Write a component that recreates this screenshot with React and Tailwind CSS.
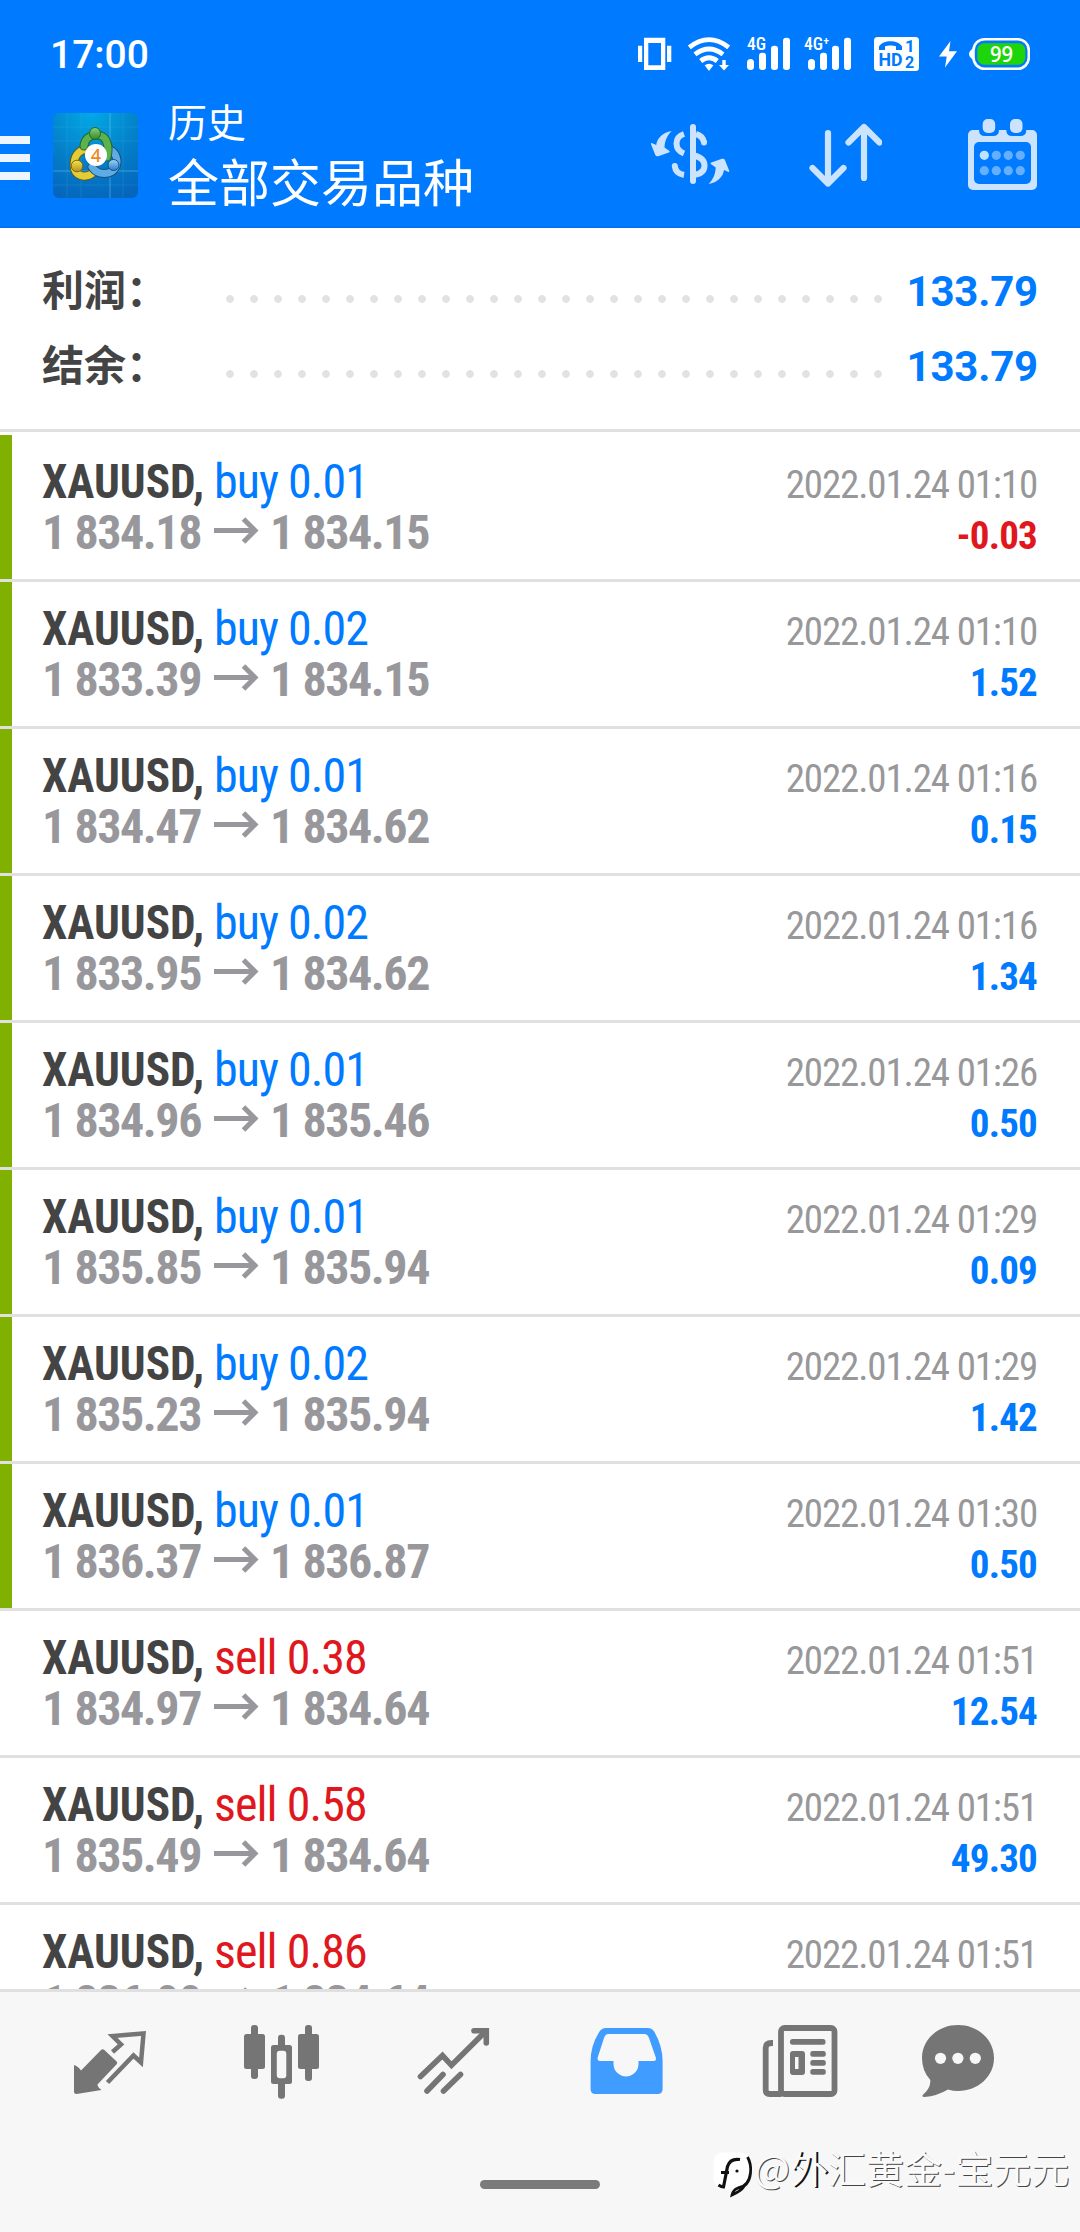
import React from 'react';

const deals = [
  { type: 'buy', lots: '0.01', open: '1 834.18', close: '1 834.15', time: '2022.01.24 01:10', profit: '-0.03', marked: true },
  { type: 'buy', lots: '0.02', open: '1 833.39', close: '1 834.15', time: '2022.01.24 01:10', profit: '1.52', marked: true },
  { type: 'buy', lots: '0.01', open: '1 834.47', close: '1 834.62', time: '2022.01.24 01:16', profit: '0.15', marked: true },
  { type: 'buy', lots: '0.02', open: '1 833.95', close: '1 834.62', time: '2022.01.24 01:16', profit: '1.34', marked: true },
  { type: 'buy', lots: '0.01', open: '1 834.96', close: '1 835.46', time: '2022.01.24 01:26', profit: '0.50', marked: true },
  { type: 'buy', lots: '0.01', open: '1 835.85', close: '1 835.94', time: '2022.01.24 01:29', profit: '0.09', marked: true },
  { type: 'buy', lots: '0.02', open: '1 835.23', close: '1 835.94', time: '2022.01.24 01:29', profit: '1.42', marked: true },
  { type: 'buy', lots: '0.01', open: '1 836.37', close: '1 836.87', time: '2022.01.24 01:30', profit: '0.50', marked: true },
  { type: 'sell', lots: '0.38', open: '1 834.97', close: '1 834.64', time: '2022.01.24 01:51', profit: '12.54' },
  { type: 'sell', lots: '0.58', open: '1 835.49', close: '1 834.64', time: '2022.01.24 01:51', profit: '49.30' },
  { type: 'sell', lots: '0.86', open: '1 836.00', close: '1 834.64', time: '2022.01.24 01:51', profit: '116.96' },
];

const Signal = ({ label, className, barX = 0 }) => (
  <svg className={className} viewBox={barX ? '0 32 48 40' : '0 32 44 40'} fill="#fff">
    <text x="0" y="50" fontSize="17.5" className="font-['Roboto_Condensed',sans-serif] font-medium">{label}</text>
    <rect x={barX} y="59" width="7" height="11" rx="3.5" />
    <rect x={barX + 12} y="52.7" width="7" height="17.3" rx="3" />
    <rect x={barX + 24} y="45.7" width="7" height="24.3" rx="3" />
    <rect x={barX + 36} y="37.7" width="7" height="32.3" rx="3" />
  </svg>
);

function StatusBar() {
  return (
    <div className="flex h-20 pt-9 pl-[50px] pr-[50px]">
      <span className="font-['Roboto',sans-serif] font-medium text-[39px] leading-[38px] text-white">17:00</span>
      <div className="ml-auto flex">
        <svg className="w-[34px] h-9" viewBox="638 36 34 36" fill="#fff">
          <path fillRule="evenodd" d="M644 37.7h21.3V70H644zM648.3 43v22.3h12.7V43z" />
          <path d="M638 45.7h4.2V62H638zM667 45.7h4.3V62H667z" />
        </svg>
        <svg className="ml-[15px] w-[44px] h-9" viewBox="687 36 44 36" fill="none" stroke="#fff" strokeWidth="4.8">
          <path d="M689.3 47.3q19.7-15.4 39.4 0" />
          <path d="M695 54.3q14-10.6 28 0" />
          <path d="M700.7 61q8.3-6.4 16.6 0" />
          <path d="M704.6 65.2q4.4-3 8.8 0L709 71z" fill="#fff" stroke="none" />
          <path d="M722.3 60h3.4v5h3.3l-5 5.6-5-5.6h3.3z" fill="#fff" stroke="none" />
        </svg>
        <Signal className="-mt-1 ml-4 w-11 h-10" label="4G" />
        <Signal className="-mt-1 ml-[13px] w-12 h-10" label="4G⁺" barX={4} />
        <svg className="ml-[22px] w-[45px] h-9" viewBox="874 36 45 36">
          <rect x="874" y="37" width="45" height="34" rx="3.5" fill="#fff" />
          <path d="M879 50v-3.500c4-7 19-7 23 0V50h-6v-3.800c-3-1-8-1-11 0V50z" fill="#007aff" />
          <g fill="#007aff" className="font-['Roboto',sans-serif] font-bold">
            <text x="878.5" y="66" fontSize="18.5" textLength="24" lengthAdjust="spacingAndGlyphs">HD</text>
            <text x="905" y="52" fontSize="17">1</text>
            <text x="905" y="67.500" fontSize="16">2</text>
          </g>
        </svg>
        <svg className="ml-5 w-[18px] h-9" viewBox="939 36 18 36">
          <path d="M950.500 41 939 56.500h7.700L945 67.500 957 51.300h-8z" fill="#fff" />
        </svg>
        <svg className="ml-3 w-[61px] h-9" viewBox="969 36 61 36">
          <path d="M973 48.500q-4 2.500-4 5.500t4 5.500z" fill="#fff" />
          <rect x="973.500" y="39.200" width="55.300" height="29.500" rx="11" fill="none" stroke="#fff" strokeWidth="2.600" />
          <rect x="977.300" y="43.300" width="48" height="21.500" rx="7" fill="#1ed40a" />
          <text x="1001.500" y="62.300" fontSize="22" textAnchor="middle" fill="#fff" className="font-['Open_Sans',sans-serif] font-semibold" textLength="23" lengthAdjust="spacingAndGlyphs">99</text>
        </svg>
      </div>
    </div>
  );
}

const AppLogo = () => (
  <svg className="ml-[23px] mt-[33px] w-[85px] h-[85px] shrink-0" viewBox="8 8 85 85">
    <defs>
      <radialGradient id="sky" cx="0.45" cy="0" r="1.05">
        <stop offset="0" stopColor="#02a9e6" />
        <stop offset="0.55" stopColor="#047fc8" />
        <stop offset="1" stopColor="#0565bd" />
      </radialGradient>
      <linearGradient id="green" x1="0" y1="0" x2="0" y2="1"><stop offset="0" stopColor="#8fd072" /><stop offset="1" stopColor="#2d8a2c" /></linearGradient>
      <linearGradient id="gold" x1="0" y1="0" x2="0" y2="1"><stop offset="0" stopColor="#f7e54b" /><stop offset="1" stopColor="#b5921a" /></linearGradient>
      <linearGradient id="azure" x1="0" y1="0" x2="0" y2="1"><stop offset="0" stopColor="#9bd5f7" /><stop offset="1" stopColor="#2a7cc9" /></linearGradient>
    </defs>
    <rect x="8" y="8" width="85" height="85" rx="6" fill="url(#sky)" />
    <path d="M22 8v85M36 8v85M78 8v85M8 22h85M8 36h85M8 80h85" stroke="#4fc0ec" strokeWidth="0.6" opacity="0.3" />
    <path d="M65 8v85M8 66h85" stroke="#7fd6f5" strokeWidth="0.9" opacity="0.5" />
    <g fill="none" strokeLinecap="round">
      <path d="M48 68C40 74 29 71 29 60 29 49 36 43 45 45" stroke="#5e5a1c" strokeWidth="9" />
      <path d="M48 68C40 74 29 71 29 60 29 49 36 43 45 45" stroke="#e3cc35" strokeWidth="7" />
      <path d="M62 44C72 46 74 57 70 63 66 70 53 71 47 62" stroke="#174f82" strokeWidth="9" />
      <path d="M62 44C72 46 74 57 70 63 66 70 53 71 47 62" stroke="#5fabe3" strokeWidth="7" />
      <path d="M39 41C40 28 59 26 62 38c2 5 1 10 0 14" stroke="#1f6828" strokeWidth="9" />
      <path d="M39 41C40 28 59 26 62 38c2 5 1 10 0 14" stroke="#5cb150" strokeWidth="7" />
    </g>
    <ellipse cx="50" cy="28.500" rx="5.500" ry="6" fill="url(#green)" stroke="#1f6828" />
    <circle cx="32" cy="61" r="5.800" fill="url(#gold)" stroke="#806719" />
    <circle cx="68.500" cy="60" r="5.500" fill="url(#azure)" stroke="#174f82" />
    <circle cx="51" cy="50" r="11" fill="#fff" />
    <text x="51" y="56.500" fontSize="18" textAnchor="middle" fill="#ef8622" className="font-['Noto_Sans',sans-serif] font-medium">4</text>
  </svg>
);

const CurvedArrow = ({ transform }) => (
  <path transform={transform} d="M671.700 131c-9 1.500-14.500 7-15.500 14l-4.500-2q-1 0-.7 1.200l4.300 10.800q.8 1.800 3 1.200l10.500-3.700q1.800-.8.300-1.800l-4.600-3.200c.2-7 3-12.500 7.200-16.500z" fill="#cce3fd" stroke="none" />
);

function Header() {
  return (
    <header className="h-[228px] shrink-0 bg-[#007aff] border-b-2 border-[#0073ee]">
      <StatusBar />
      <div className="flex items-start">
        <div className="mt-14 flex w-[30px] shrink-0 flex-col gap-2.5">
          <span className="h-2 bg-[#edf5ff]" />
          <span className="h-2 bg-[#edf5ff]" />
          <span className="h-2 bg-[#edf5ff]" />
        </div>
        <AppLogo />
        <div className="ml-[30px] mt-[18px] text-white font-['Noto_Sans_CJK_SC',sans-serif]">
          <div className="text-[39px] leading-[44px]">历史</div>
          <div className="text-[51px] leading-[76px]">全部交易品种</div>
        </div>
        <div className="ml-auto mr-[43px] mt-9 flex">
          <svg className="w-[79px] h-20" viewBox="651 116 79 80" fill="none" stroke="#cce3fd" strokeWidth="6">
            <path d="M693 127v54" strokeLinecap="round" />
            <path d="M684 134q-7.500 2.500-7.500 9.500t7.500 10" />
            <path d="M674.800 166q.7 7.500 9.200 9" />
            <path d="M674.800 166v.1M704 142.300v.1" strokeLinecap="round" />
            <path d="M696 134q7 2 8 8.500" />
            <path d="M694 155.500q10.500 2.500 10.500 10t-9.500 9.300" />
            <CurvedArrow />
            <CurvedArrow transform="rotate(180 690.1 157.500)" />
          </svg>
          <svg className="ml-[79px] w-[73px] h-20" viewBox="809 116 73 80" fill="none" stroke="#cce3fd" strokeWidth="6.200" strokeLinecap="round" strokeLinejoin="round">
            <path d="M828 133v50.500M812.500 168l15.500 15.500 15.500-15.500" />
            <path d="M864 178v-51M848.500 142.500 864 127l15.500 15.500" />
          </svg>
          <svg className="ml-[86px] w-[69px] h-20" viewBox="968 116 69 80" fill="#cce3fd">
            <rect x="968" y="130" width="69" height="60" rx="5" />
            <path d="M979 129v1q0 6 6 6h8q6 0 6-6v-1zM1006.300 129v1q0 6 6 6h8q6 0 6-6v-1z" fill="#007aff" />
            <rect x="974" y="142" width="57" height="42" rx="5" fill="#007aff" />
            <rect x="982.700" y="119" width="12.500" height="14" rx="5" />
            <rect x="1010" y="119" width="12.500" height="14" rx="5" />
            <circle cx="984.300" cy="155.300" r="4.600" fill="#bfe2ff" />
            <g fill="#66afff">
              <circle cx="996.300" cy="155.300" r="4.600" />
              <circle cx="1008.300" cy="155.300" r="4.600" />
              <circle cx="1020.300" cy="155.300" r="4.600" />
              <circle cx="984.300" cy="170.700" r="4.600" />
              <circle cx="996.300" cy="170.700" r="4.600" />
              <circle cx="1008.300" cy="170.700" r="4.600" />
              <circle cx="1020.300" cy="170.700" r="4.600" />
            </g>
          </svg>
        </div>
      </div>
    </header>
  );
}

const SummaryRow = ({ label, value }) => (
  <div className="flex h-[75px] pl-[42px] pr-[42px]">
    <span className="w-[176px] shrink-0 font-['Noto_Sans_CJK_SC',sans-serif] font-bold text-[42px] leading-[75px] text-[#444444] whitespace-nowrap">{label}</span>
    <span className="mt-[45px] h-2 w-[672px] shrink-0 bg-[radial-gradient(circle,#e2e2e2_3.5px,transparent_4.2px)] bg-[size:24px_8px]" />
    <span className="mt-1 ml-auto font-['Roboto',sans-serif] font-bold text-[42px] leading-[75px] tracking-[-0.2px] text-[#007aff]">{value}</span>
  </div>
);

function DealRow({ deal }) {
  const typeColor = deal.type === 'buy' ? 'text-[#007aff]' : 'text-[#e0181e]';
  const profitColor = deal.profit.startsWith('-') ? 'text-[#e0181e]' : 'text-[#007aff]';
  return (
    <div className="flex h-[147px] shrink-0 border-b-[3px] border-[#e0e0e0] font-['Roboto_Condensed',sans-serif] whitespace-nowrap">
      <span className={`w-3 shrink-0 ${deal.marked ? 'bg-[#80b000]' : ''}`} />
      <div className="ml-[30px] pt-[21px] text-[48px] leading-[51px]">
        <div className="flex">
          <span className="w-[172px] origin-left scale-x-[0.943] font-bold text-[#444444]">XAUUSD,</span>
          <span className={`tracking-[-0.95px] ${typeColor}`}>{deal.type} {deal.lots}</span>
        </div>
        <div className="flex font-bold text-[#98989c] tracking-[-1.45px]">
          <span className="w-[171px]">{deal.open}</span>
          <svg className="mt-1 w-[46px] h-[34px]" viewBox="0 0 46 34" fill="none" stroke="#98989c" strokeWidth="5">
            <path d="M1 19.500h42M30.500 8l11.500 11.500L30.500 31" />
          </svg>
          <span className="ml-[11px]">{deal.close}</span>
        </div>
      </div>
      <div className="ml-auto mr-[43px] pt-[25px] text-right text-[39px] leading-[51px] tracking-[-1.15px]">
        <div className="text-[#98989a]">{deal.time}</div>
        <div className={`font-bold tracking-[-0.8px] ${profitColor}`}>{deal.profit}</div>
      </div>
    </div>
  );
}

function BottomNav() {
  return (
    <nav className="flex h-[243px] shrink-0 flex-col border-t-[3px] border-[#e0e0e0] bg-[#f7f7f7]">
      <div className="mt-7 flex pl-[74px]">
        <svg className="w-[73px] h-20" viewBox="74 2020 73 80">
          <path d="M74 2065q4 1 7 5.500L101 2050q1.700-1.500 3.400 0l12 11.300q1.700 1.500.2 3L97.500 2084.500q0 2.500 4 5.500l-25 4q-2.500 0-2.500-2.500z" fill="#757575" />
          <path d="M112.500 2052 121 2044.500 112.500 2036 143.500 2033.500 141 2062.500 133.500 2055.500 107.500 2082.500" fill="none" stroke="#757575" strokeWidth="4.500" />
        </svg>
        <svg className="ml-[97px] w-[75px] h-20" viewBox="244 2020 75 80" fill="#757575">
          <rect x="251" y="2025" width="7" height="54" rx="3" />
          <rect x="244" y="2034" width="21" height="35" rx="2.500" />
          <rect x="278" y="2034.700" width="7" height="64" rx="3" />
          <rect x="271" y="2045" width="21" height="39" rx="2.500" />
          <rect x="276.800" y="2050.700" width="9.500" height="27.500" rx="3" fill="#f7f7f7" />
          <rect x="305" y="2025" width="7" height="56" rx="3" />
          <rect x="298" y="2034" width="21" height="35" rx="2.500" />
        </svg>
        <svg className="ml-[98px] w-[73px] h-20" viewBox="417 2020 73 80" fill="none" stroke="#757575" strokeWidth="5.600" strokeLinecap="round">
          <path d="M420.500 2076.500 442.500 2055.500 451.500 2065.300 485.500 2031.500" />
          <path d="M474 2030.800h12.300V2043" />
          <path d="M427 2091 443 2074.500M443.500 2091l17-16.500" />
        </svg>
        <svg className="ml-[100px] w-[73px] h-20" viewBox="590 2020 73 80">
          <path fillRule="evenodd" fill="#409cff" d="M606 2028h42q4 0 6.500 4 8 14 8.100 29v28q0 5-5 5h-62q-5 0-5-5v-28q.1-15 8-28 2.700-5 7.400-5zM604 2038l-6.300 19.500q-.8 3.500 2.300 3.500h13.500v3a12.500 12.500 0 0 0 25 0v-3H653.700q3 0 2.100-3.500L649 2038q-1.500-4-4.500-4h-36.200q-3 0-4.300 4z" />
        </svg>
        <svg className="ml-[99px] w-[76px] h-20" viewBox="762 2020 76 80" fill="none" stroke="#757575" strokeWidth="5.800">
          <rect x="781" y="2028" width="53.500" height="66" rx="3.500" />
          <path d="M773 2043h-1.500q-5.800 0-5.800 5v42q0 4 4 4h12" />
          <g fill="#757575" stroke="none">
            <rect x="790" y="2039" width="35.500" height="5.800" rx="2.500" />
            <rect x="790" y="2051" width="15" height="24" rx="3" />
            <rect x="795" y="2057" width="3.500" height="12" fill="#f7f7f7" />
            <rect x="810.300" y="2051" width="15.500" height="5.800" rx="2.500" />
            <rect x="810.300" y="2060" width="15.500" height="5.800" rx="2.500" />
            <rect x="810.300" y="2069" width="15.500" height="5.800" rx="2.500" />
          </g>
        </svg>
        <svg className="ml-[84px] w-[72px] h-20" viewBox="922 2020 72 80">
          <path d="M958 2025c20 0 36 14.500 36 33s-16 33-36 33q-5 0-10-1.500-11 6.500-23.500 7.500-3.500-.2-1.200-2.500 7.500-6.500 7-14.500-8.300-9-8.300-22c0-18.500 16-33 36-33z" fill="#757575" />
          <g fill="#f7f7f7">
            <circle cx="940.500" cy="2058.300" r="5.600" />
            <circle cx="957.900" cy="2058.300" r="5.600" />
            <circle cx="975.300" cy="2058.300" r="5.600" />
          </g>
        </svg>
      </div>
      {/* gesture handle */}
      <span className="mx-auto mt-20 h-[9px] w-[120px] rounded-full bg-[#7b7b7b]" />
    </nav>
  );
}

const Watermark = () => (
  <div className="absolute left-[713px] top-[2150px] flex items-start">
    <svg className="w-[42px] h-[48px]" viewBox="0 0 42 48" fill="none">
      <rect x="0.500" y="2.500" width="36.500" height="36" rx="9" fill="#fff" />
      <path d="M34.500 7q4 7 3 16C36.500 32 32 37 25 38q-5 2-6 7 9-4 12-8.500" stroke="#111" strokeWidth="2.800" />
      <path d="M27 9.500q-10-1.500-12.500 7L10.500 37q-2 0-5-2M8 22.500h8" stroke="#111" strokeWidth="3.200" />
      <circle cx="24" cy="21" r="1.600" fill="#111" />
    </svg>
    <span className="-ml-px font-['Noto_Sans_CJK_SC',sans-serif] text-[38px] leading-[34px] text-[#fafafa] whitespace-nowrap [text-shadow:1px_1px_0.5px_#444]">@<span className="[text-shadow:2px_1px_0_#111]">外</span>汇黄金-宝元元</span>
  </div>
);

export default function App() {
  return (
    <div className="relative flex h-[2232px] w-[1080px] flex-col overflow-hidden bg-white">
      <Header />
      <section className="h-[204px] shrink-0 border-b-[3px] border-[#e0e0e0] pt-[22px]">
        <SummaryRow label="利润：" value="133.79" />
        <SummaryRow label="结余：" value="133.79" />
      </section>
      <main className="flex min-h-0 flex-1 flex-col overflow-hidden pt-[3px]">
        {deals.map((deal, i) => <DealRow key={i} deal={deal} />)}
      </main>
      <BottomNav />
      <Watermark />
    </div>
  );
}
